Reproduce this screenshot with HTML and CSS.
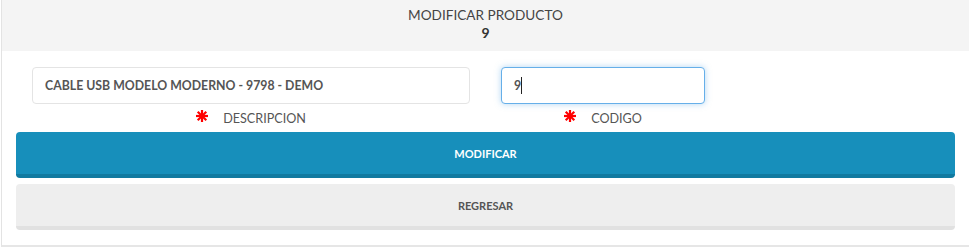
FILE: index.html
```html
<!DOCTYPE html>
<html lang="es">
<head>
    <meta charset="UTF-8">
    <meta name="viewport" content="width=device-width, initial-scale=1.0">
    <title>Modificar Producto</title>
    <link rel="stylesheet" href="styles.css">
</head>
<body>
    <div class="panel">
        <div class="panel-heading">
            <div class="title">MODIFICAR PRODUCTO</div>
            <div class="product-id">9</div>
        </div>
        <div class="panel-body">
            <form id="edit-form">
                <div class="row">
                    <div class="field field-wide">
                        <input type="text" id="descripcion" value="CABLE USB MODELO MODERNO - 9798 - DEMO">
                        <label for="descripcion">
                            <svg class="required" viewBox="0 0 12 12" width="12" height="12">
                                <g stroke="#ff0000" stroke-width="2.2" stroke-linecap="square">
                                    <line x1="6" y1="1" x2="6" y2="11"/>
                                    <line x1="1" y1="6" x2="11" y2="6"/>
                                    <line x1="2.5" y1="2.5" x2="9.5" y2="9.5"/>
                                    <line x1="9.5" y1="2.5" x2="2.5" y2="9.5"/>
                                </g>
                            </svg>
                            DESCRIPCION
                        </label>
                    </div>
                    <div class="field field-narrow">
                        <div class="input-wrap">
                            <input type="text" id="codigo" class="focused" value="9">
                            <span class="caret"></span>
                        </div>
                        <label for="codigo">
                            <svg class="required" viewBox="0 0 12 12" width="12" height="12">
                                <g stroke="#ff0000" stroke-width="2.2" stroke-linecap="square">
                                    <line x1="6" y1="1" x2="6" y2="11"/>
                                    <line x1="1" y1="6" x2="11" y2="6"/>
                                    <line x1="2.5" y1="2.5" x2="9.5" y2="9.5"/>
                                    <line x1="9.5" y1="2.5" x2="2.5" y2="9.5"/>
                                </g>
                            </svg>
                            CODIGO
                        </label>
                    </div>
                </div>
                <button type="submit" class="btn btn-primary">MODIFICAR</button>
                <button type="button" class="btn btn-default">REGRESAR</button>
            </form>
        </div>
    </div>
</body>
</html>
```

FILE: styles.css
```css
body {
    font-family: Lato, "Open Sans", sans-serif;
    margin: 0;
    padding: 0;
    background-color: #ffffff;
    color: #555;
}

.panel {
    margin-left: 1px;
    border-left: 1px solid #e3e3e3;
    border-bottom: 2px solid #e6e6e6;
    background-color: #fff;
}

.panel-heading {
    background-color: #f4f4f4;
    height: 51px;
    padding-top: 6px;
    box-sizing: border-box;
    text-align: center;
    color: #444;
}

.title {
    font-size: 13.6px;
    line-height: 18px;
}

.product-id {
    font-size: 14px;
    font-weight: bold;
    line-height: 17px;
    color: #333;
}

.panel-body {
    padding: 16px 14px 15px 14px;
}

.row {
    display: flex;
    padding: 0 16px;
    gap: 31px;
}

.field {
    display: flex;
    flex-direction: column;
    align-items: center;
}

.field-wide {
    width: 438px;
}

.field-narrow {
    width: 204px;
}

.input-wrap {
    position: relative;
    width: 100%;
}

.field input {
    width: 100%;
    height: 37px;
    box-sizing: border-box;
    padding: 0 12px;
    border: 1px solid #e4e4e4;
    border-radius: 4px;
    font-family: inherit;
    font-size: 12.3px;
    font-weight: bold;
    color: #555;
    outline: none;
}

.field input.focused {
    border-color: #66afe9;
    box-shadow: 0 0 6px rgba(102, 175, 233, 0.5);
}

.caret {
    position: absolute;
    left: 20px;
    top: 10px;
    width: 1px;
    height: 17px;
    background-color: #222;
}

.field label {
    display: flex;
    align-items: center;
    gap: 15px;
    height: 28px;
    font-size: 12.6px;
    color: #555;
}

.required {
    width: 12px;
    height: 12px;
    margin-top: -4px;
}

.btn {
    display: block;
    width: 100%;
    height: 46px;
    border: none;
    border-radius: 4px;
    font-family: inherit;
    font-size: 11px;
    font-weight: bold;
    cursor: pointer;
}

.btn-primary {
    background-color: #178fbb;
    border-bottom: 4px solid #117aa0;
    color: #fff;
    margin-bottom: 6px;
}

.btn-default {
    background-color: #eeeeee;
    border-bottom: 4px solid #e1e1e1;
    color: #555;
}
```
